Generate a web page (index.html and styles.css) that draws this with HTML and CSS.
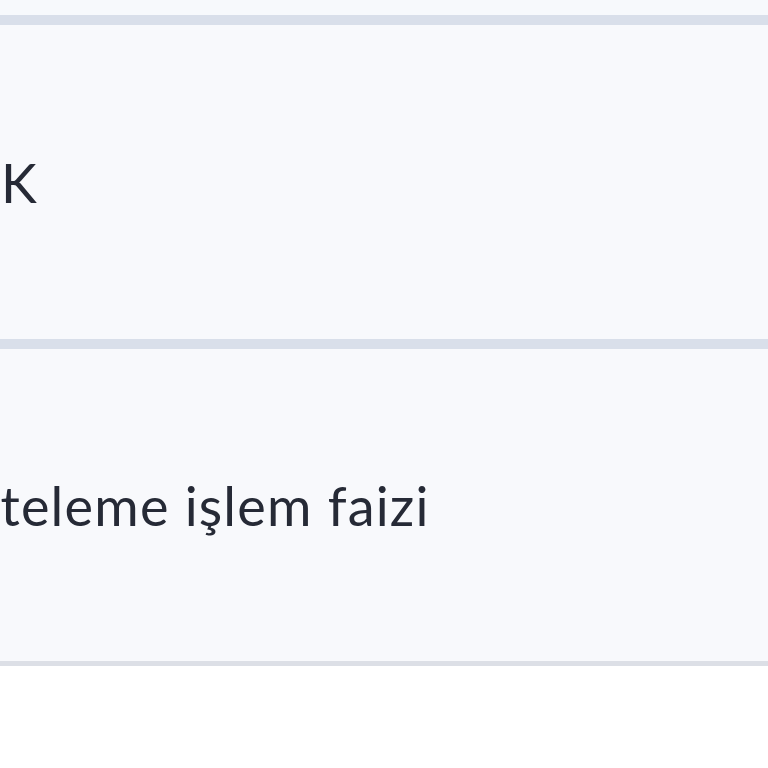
FILE: index.html
```html
<!doctype html>
<html>
  <head>
    <title>Faiz tablosu</title>
    <link rel="stylesheet" href="styles.css">
  </head>
  <body>
    <div class="tablo">
      <div class="ust_satir"></div>
      <div class="satir">
        <span class="hucre hucre_kisa">K</span>
      </div>
      <div class="satir satir_son">
        <span class="hucre hucre_kesik">Erteleme işlem faizi</span>
      </div>
    </div>
  </body>
</html>
```

FILE: styles.css
```css
body {
  margin: 0;
  background-color: white;
  font-family: Lato, "Noto Sans", sans-serif;
  color: #262a36;
}

.tablo {
  display: flex;
  flex-direction: column;
  overflow: hidden;
}

.ust_satir {
  height: 15px;
  background-color: #f7f9fc;
}

.satir {
  display: flex;
  align-items: center;
  height: 314px;
  background-color: #f8f9fc;
  border-top: 10px solid #d9dfea;
}

.satir_son {
  height: 312px;
  border-bottom: 5px solid #dcdfe6;
}

.hucre {
  font-size: 54px;
  letter-spacing: 1.2px;
  white-space: nowrap;
}

.hucre_kisa {
  padding-left: 1px;
}

.hucre_kesik {
  margin-left: -52px;
}
```
